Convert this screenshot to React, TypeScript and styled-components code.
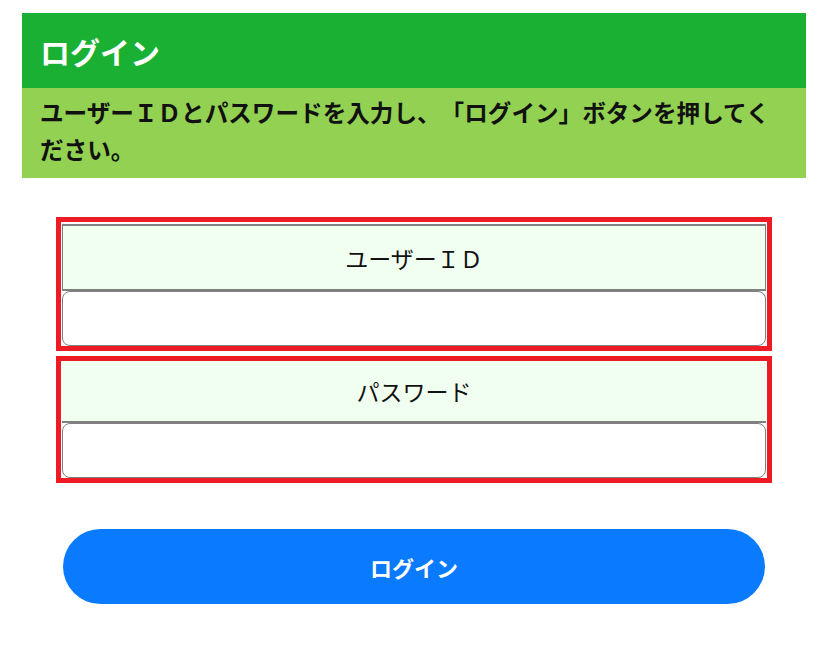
import styled, { createGlobalStyle } from 'styled-components'

const GlobalStyle = createGlobalStyle`
  body {
    margin: 0;
    background: #ffffff;
    font-family: "Liberation Serif", "Noto Sans CJK JP", serif;
  }
`

const Page = styled.div`
  padding: 13px 22px;
`

const Header = styled.h1`
  margin: 0;
  height: 75px;
  padding: 0 18px;
  display: flex;
  align-items: center;
  background: #19b034;
  color: #ffffff;
  font-size: 30px;
  font-weight: bold;
`

const Lead = styled.p`
  margin: 0;
  padding: 8px 18px;
  background: #93d152;
  color: #111111;
  font-size: 23.6px;
  font-weight: bold;
  line-height: 37px;
  text-spacing-trim: space-all;
`

const Form = styled.form`
  margin-top: 39px;
  padding: 0 34px;
  display: flex;
  flex-direction: column;
  gap: 5px;
`

const Field = styled.div<{ framed?: boolean }>`
  border: 5px solid #ed1c24;
  padding: ${p => (p.framed ? '2px 1px 0' : '0 1px')};
  display: flex;
  flex-direction: column;
`

const Label = styled.label<{ framed?: boolean }>`
  height: ${p => (p.framed ? '63px' : '60px')};
  display: flex;
  align-items: center;
  justify-content: center;
  background: #f0fff0;
  border-bottom: 2px solid #808080;
  border-top: ${p => (p.framed ? '2px solid #808080' : 'none')};
  border-left: ${p => (p.framed ? '1px solid #808080' : 'none')};
  border-right: ${p => (p.framed ? '1px solid #808080' : 'none')};
  color: #111111;
  font-size: 23px;
`

const Input = styled.input`
  box-sizing: border-box;
  height: 55px;
  width: 100%;
  border: 1px solid #808080;
  border-radius: 8px;
  background: #ffffff;
  font-size: 20px;
  padding: 0 10px;
`

const Submit = styled.button`
  margin: 46px 41px 0;
  width: calc(100% - 82px);
  height: 75px;
  border: none;
  border-radius: 38px;
  background: #0a7bff;
  color: #ffffff;
  font-family: "Noto Sans CJK JP", "Noto Sans", sans-serif;
  font-size: 22px;
  font-weight: bold;
`

const App = () => (
  <Page>
    <GlobalStyle />
    <Header>ログイン</Header>
    <Lead>ユーザーＩＤとパスワードを入力し、「ログイン」ボタンを押してください。</Lead>
    <Form onSubmit={e => e.preventDefault()}>
      <Field framed>
        <Label framed htmlFor="user">ユーザーＩＤ</Label>
        <Input id="user" type="text" />
      </Field>
      <Field>
        <Label htmlFor="pass">パスワード</Label>
        <Input id="pass" type="password" />
      </Field>
    </Form>
    <Submit type="submit">ログイン</Submit>
  </Page>
)

export default App
